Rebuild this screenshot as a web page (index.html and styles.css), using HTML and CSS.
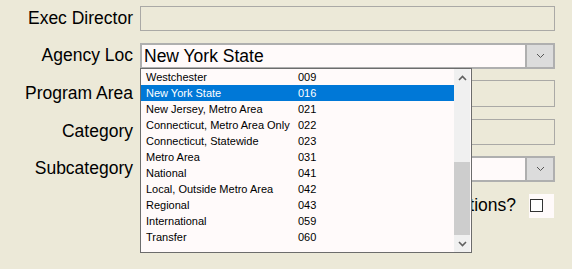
FILE: index.html
```html
<!DOCTYPE html>
<html>
<head>
<meta charset="utf-8">
<link rel="stylesheet" href="styles.css">
</head>
<body>
<div class="form">
  <div class="label">Exec Director</div>
  <div class="field"><div class="input"></div></div>

  <div class="label">Agency Loc</div>
  <div class="field">
    <div class="select">
      <div class="select-value">New York State</div>
      <div class="select-btn"><svg width="9" height="6" viewBox="0 0 9 6"><path d="M1 1 L4.5 4.5 L8 1" fill="none" stroke="#555" stroke-width="1"/></svg></div>
    </div>
  </div>

  <div class="label">Program Area</div>
  <div class="field"><div class="input"></div></div>

  <div class="label">Category</div>
  <div class="field"><div class="input"></div></div>

  <div class="label">Subcategory</div>
  <div class="field">
    <div class="select">
      <div class="select-value"></div>
      <div class="select-btn"><svg width="9" height="6" viewBox="0 0 9 6"><path d="M1 1 L4.5 4.5 L8 1" fill="none" stroke="#555" stroke-width="1"/></svg></div>
    </div>
  </div>

  <div class="check-row">
    <span class="check-label">Restricted Donations?</span>
    <span class="check-wrap"><span class="check-box"></span></span>
  </div>
</div>

<div class="popup">
  <div class="list">
    <div class="item"><span class="name">Westchester</span><span>009</span></div>
    <div class="item sel"><span class="name">New York State</span><span>016</span></div>
    <div class="item"><span class="name">New Jersey, Metro Area</span><span>021</span></div>
    <div class="item"><span class="name">Connecticut, Metro Area Only</span><span>022</span></div>
    <div class="item"><span class="name">Connecticut, Statewide</span><span>023</span></div>
    <div class="item"><span class="name">Metro Area</span><span>031</span></div>
    <div class="item"><span class="name">National</span><span>041</span></div>
    <div class="item"><span class="name">Local, Outside Metro Area</span><span>042</span></div>
    <div class="item"><span class="name">Regional</span><span>043</span></div>
    <div class="item"><span class="name">International</span><span>059</span></div>
    <div class="item"><span class="name">Transfer</span><span>060</span></div>
  </div>
  <div class="scrollbar">
    <div class="arrow"><svg width="9" height="6" viewBox="0 0 9 6"><path d="M1 5 L4.5 1.5 L8 5" fill="none" stroke="#606060" stroke-width="1.6"/></svg></div>
    <div class="track"><div class="thumb"></div></div>
    <div class="arrow"><svg width="9" height="6" viewBox="0 0 9 6"><path d="M1 1 L4.5 4.5 L8 1" fill="none" stroke="#606060" stroke-width="1.6"/></svg></div>
  </div>
</div>
</body>
</html>
```
FILE: styles.css
```css
html, body {
  margin: 0;
  padding: 0;
  background: #ece9d8;
  width: 572px;
  height: 269px;
  overflow: hidden;
  font-family: "Liberation Sans", Arial, sans-serif;
}

.form {
  display: grid;
  grid-template-columns: 133px 415px;
  column-gap: 7px;
  grid-template-rows: 25px 26px 27px 26px 26px 24px;
  row-gap: 11.5px;
  padding-top: 6px;
}

.label {
  font-size: 17.5px;
  color: #000;
  text-align: right;
  display: flex;
  align-items: center;
  justify-content: flex-end;
  line-height: 1;
}

.field {
  display: flex;
}

.input {
  flex: 1;
  box-sizing: border-box;
  border: 1px solid #aaa9a6;
  background: #ece9d8;
}

.select {
  flex: 1;
  display: flex;
  box-sizing: border-box;
  border: 2px solid #afafaf;
  background: #fffafa;
}

.select-value {
  flex: 1;
  font-size: 17.5px;
  line-height: 22px;
  padding-left: 2px;
  color: #000;
}

.select-btn {
  width: 26px;
  background: #dcdcdc;
  border-left: 2px solid #afafaf;
  display: flex;
  align-items: center;
  justify-content: center;
}

.check-row {
  grid-column: 1 / 3;
  display: flex;
  justify-content: flex-end;
  align-items: center;
  padding-right: 1px;
}

.check-label {
  font-size: 17.5px;
  margin-right: 13px;
}

.check-wrap {
  width: 25px;
  height: 24px;
  background: #fffafa;
  display: flex;
  align-items: center;
  padding-left: 1px;
  box-sizing: border-box;
}

.check-box {
  width: 13px;
  height: 13px;
  box-sizing: border-box;
  border: 1px solid #333;
  background: #fff;
}

.popup {
  position: absolute;
  left: 140px;
  top: 68px;
  width: 332px;
  height: 185px;
  box-sizing: border-box;
  border: 1px solid #6c6c6c;
  background: #fffafa;
  display: flex;
}

.list {
  flex: 1;
  font-size: 11px;
  color: #000;
}

.item {
  height: 16px;
  display: flex;
  align-items: center;
  padding-left: 5px;
}

.item .name {
  width: 152px;
}

.item.sel {
  background: #0078d7;
  color: #fff;
}

.scrollbar {
  width: 16px;
  background: #f0f0f0;
  display: flex;
  flex-direction: column;
  margin-right: 1px;
}

.arrow {
  height: 17px;
  display: flex;
  align-items: center;
  justify-content: center;
}

.track {
  flex: 1;
  display: flex;
  flex-direction: column;
  justify-content: flex-end;
}

.thumb {
  height: 73px;
  background: #cdcdcd;
}
```
